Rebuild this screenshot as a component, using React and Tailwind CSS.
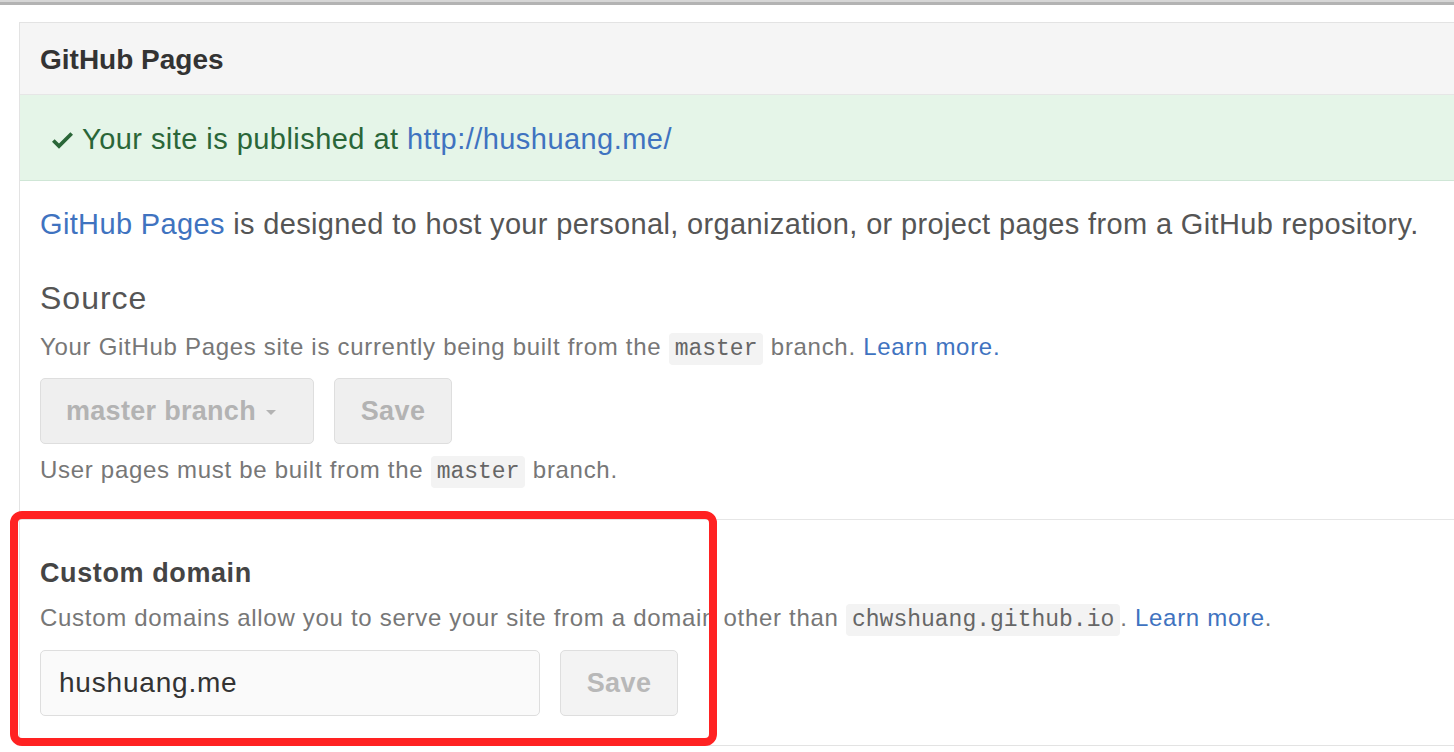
import React from "react";

const sans = { fontFamily: '"Liberation Sans", Arial, sans-serif' };

function Code({ children }) {
  return (
    <code className="rounded-[4px] bg-[#f3f3f3] px-[6px] py-[3px] font-['Liberation_Mono',monospace] text-[23px] leading-[0] tracking-normal text-[#666]">
      {children}
    </code>
  );
}

export default function App() {
  return (
    <div className="relative h-[752px] w-[1454px] overflow-hidden bg-white" style={sans}>
      <div className="h-[2px] bg-[#d6d6d6]" />
      <div className="h-[3px] bg-[#b3b3b3]" />
      <div className="ml-[19px] mt-[17px] w-[1460px] border border-r-0 border-[#e3e3e3]">
        <div className="flex h-[72px] items-center border-b border-[#e6e6e6] bg-[#f5f5f5] pl-[20px] pt-[3px] text-[28px] font-bold text-[#333]">
          GitHub Pages
        </div>
        <div className="flex h-[86px] items-center border-b border-[#cfe6d6] bg-[#e5f5e8] pl-[32px] pt-[4px] text-[29px] tracking-[0.45px] text-[#2a6638]">
          <svg width="21" height="28" viewBox="0 0 12 16" className="mr-[9px]" fill="#2a6638">
            <path d="M12 5l-8 8-4-4 1.5-1.5L4 10l6.5-6.5L12 5z" />
          </svg>
          <span>Your site is published at&nbsp;</span>
          <a className="text-[#3f73c0]">http://hushuang.me/</a>
        </div>
        <div className="border-b border-[#e6e6e6] px-[20px] pb-[34px] pt-[25px]">
          <p className="text-[29px] leading-[36px] tracking-[0.35px] text-[#555]">
            <a className="text-[#3f73c0]">GitHub Pages</a> is designed to host your personal, organization, or project pages from a GitHub repository.
          </p>
          <h3 className="mt-[36px] text-[32px] leading-[40px] tracking-[1px] text-[#555]">Source</h3>
          <p className="mt-[14px] text-[24px] leading-[30px] tracking-[0.7px] text-[#777]">
            Your GitHub Pages site is currently being built from the <Code>master</Code> branch.{" "}
            <a className="text-[#3f73c0]">Learn more.</a>
          </p>
          <div className="mt-[16px] flex gap-[20px]">
            <div className="flex h-[66px] w-[274px] items-center gap-[10px] rounded-[5px] border border-[#dedede] bg-[#efefef] pl-[25px] text-[27px] font-bold tracking-[0.3px] text-[#b3b3b3]">
              master branch
              <span className="mt-[2px] inline-block h-0 w-0 border-x-[5px] border-t-[5px] border-x-transparent border-t-[#b3b3b3]" />
            </div>
            <div className="flex h-[66px] w-[118px] items-center justify-center rounded-[5px] border border-[#dedede] bg-[#efefef] text-[27px] font-bold tracking-[0.4px] text-[#b3b3b3]">
              Save
            </div>
          </div>
          <p className="mt-[11px] text-[24px] leading-[30px] tracking-[0.7px] text-[#777]">
            User pages must be built from the <Code>master</Code> branch.
          </p>
        </div>
        <div className="px-[20px] pb-[29px] pt-[35px]">
          <h3 className="text-[27px] font-bold leading-[36px] tracking-[0.6px] text-[#444]">Custom domain</h3>
          <p className="mt-[12px] text-[24px] leading-[30px] tracking-[0.7px] text-[#777]">
            Custom domains allow you to serve your site from a domain other than <Code>chwshuang.github.io</Code>.{" "}
            <a className="text-[#3f73c0]">Learn more</a>.
          </p>
          <div className="mt-[17px] flex gap-[20px]">
            <div className="flex h-[66px] w-[500px] items-center rounded-[5px] border border-[#dedede] bg-[#fafafa] pl-[18px] text-[28px] tracking-[0.8px] text-[#333]">
              hushuang.me
            </div>
            <div className="flex h-[66px] w-[118px] items-center justify-center rounded-[5px] border border-[#dedede] bg-[#f3f3f3] text-[27px] font-bold tracking-[0.4px] text-[#b8b8b8]">
              Save
            </div>
          </div>
        </div>
      </div>
      <div className="absolute left-[10px] top-[511px] h-[235px] w-[707px] rounded-[12px] border-[8px] border-[#ff2222]" />
    </div>
  );
}
